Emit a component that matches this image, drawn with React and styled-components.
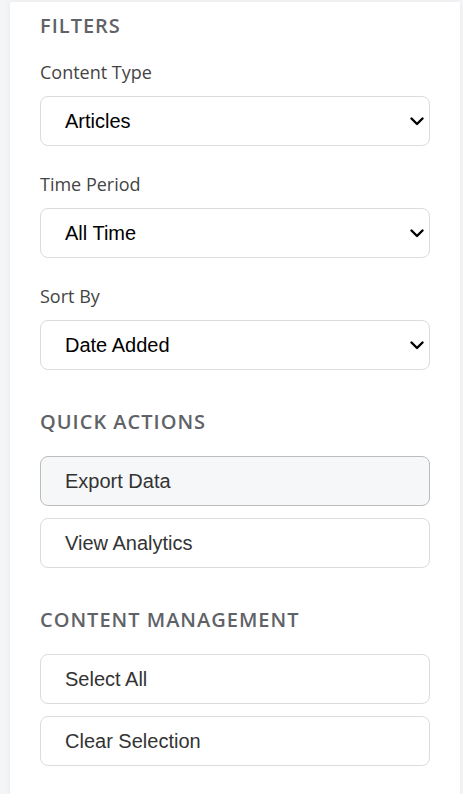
import React, { useState } from 'react'
import styled, { createGlobalStyle } from 'styled-components'

// Sidebar with filter selects and action buttons

const GlobalStyle = createGlobalStyle`
  html, body {
    margin: 0;
    padding: 0;
    background: #f4f5f7;
  }
  * {
    box-sizing: border-box;
  }
`;

const filters = [
  { label: 'Content Type', options: ['Articles', 'Videos', 'Podcasts'] },
  { label: 'Time Period', options: ['All Time', 'Last 7 Days', 'Last 30 Days'] },
  { label: 'Sort By', options: ['Date Added', 'Title', 'Popularity'] },
];

export default function App() {
  const [values, setValues] = useState(filters.map((f) => f.options[0]));

  function changeValue(i, v) {
    const next = [...values];
    next[i] = v;
    setValues(next);
  }

  return (
    <>
      <GlobalStyle />
      <Page>
        <Panel>
          <Section>
            <Heading>Filters</Heading>
            <Groups>
              {filters.map((f, i) => (
                <Group key={f.label}>
                  <Label>{f.label}</Label>
                  <SelectWrap>
                    <Select value={values[i]} onChange={(e) => changeValue(i, e.target.value)}>
                      {f.options.map((o) => (
                        <option key={o}>{o}</option>
                      ))}
                    </Select>
                    <Chevron width="14" height="9" viewBox="0 0 14 9">
                      <polyline points="1.5,1.5 7,7 12.5,1.5" fill="none" stroke="#000" strokeWidth="2.4" strokeLinecap="round" strokeLinejoin="round" />
                    </Chevron>
                  </SelectWrap>
                </Group>
              ))}
            </Groups>
          </Section>

          <Section>
            <Heading>Quick Actions</Heading>
            <Buttons>
              <ActionButton $active>Export Data</ActionButton>
              <ActionButton>View Analytics</ActionButton>
            </Buttons>
          </Section>

          <Section>
            <Heading>Content Management</Heading>
            <Buttons>
              <ActionButton>Select All</ActionButton>
              <ActionButton>Clear Selection</ActionButton>
            </Buttons>
          </Section>
        </Panel>
      </Page>
    </>
  )
};

const Page = styled.div`
  min-height: 100vh;
  padding: 2px 3px 0 10px;
  display: flex;
`;

const Panel = styled.aside`
  width: 450px;
  min-height: 792px;
  background: #ffffff;
  box-shadow: 0 0 6px rgba(0, 0, 0, 0.06);
  padding: 10px 30px 30px 30px;
  display: flex;
  flex-direction: column;
  gap: 38px;
`;

const Section = styled.section`
  display: flex;
  flex-direction: column;
`;

const Heading = styled.h3`
  margin: 0 0 20px 0;
  font-family: "Open Sans", "Noto Sans", sans-serif;
  font-size: 20px;
  line-height: 28px;
  font-weight: 600;
  letter-spacing: 1px;
  text-transform: uppercase;
  color: #5f6368;
`;

const Groups = styled.div`
  display: flex;
  flex-direction: column;
  gap: 26px;
`;

const Group = styled.div`
  display: flex;
  flex-direction: column;
  gap: 12px;
`;

const Label = styled.label`
  font-family: "Open Sans", "Noto Sans", sans-serif;
  font-size: 18px;
  line-height: 24px;
  color: #444444;
`;

const SelectWrap = styled.div`
  position: relative;
`;

const Select = styled.select`
  appearance: none;
  -webkit-appearance: none;
  width: 100%;
  height: 50px;
  padding: 0 40px 0 24px;
  border: 1px solid #dcdcdc;
  border-radius: 8px;
  background: #ffffff;
  font-family: "Liberation Sans", Arial, sans-serif;
  font-size: 20px;
  color: #000000;
  outline: none;
`;

const Chevron = styled.svg`
  position: absolute;
  right: 6px;
  top: 21px;
  pointer-events: none;
`;

const Buttons = styled.div`
  display: flex;
  flex-direction: column;
  gap: 12px;
`;

const ActionButton = styled.button`
  width: 100%;
  height: 50px;
  padding: 0 24px;
  text-align: left;
  border-radius: 8px;
  border: 1px solid ${(p) => (p.$active ? '#bdbdbd' : '#dcdcdc')};
  background: ${(p) => (p.$active ? '#f6f7f9' : '#ffffff')};
  font-family: "Liberation Sans", Arial, sans-serif;
  font-size: 20px;
  color: #333333;
  cursor: pointer;

  &:hover {
    background: #f6f7f9;
    border-color: #bdbdbd;
  }
`;
